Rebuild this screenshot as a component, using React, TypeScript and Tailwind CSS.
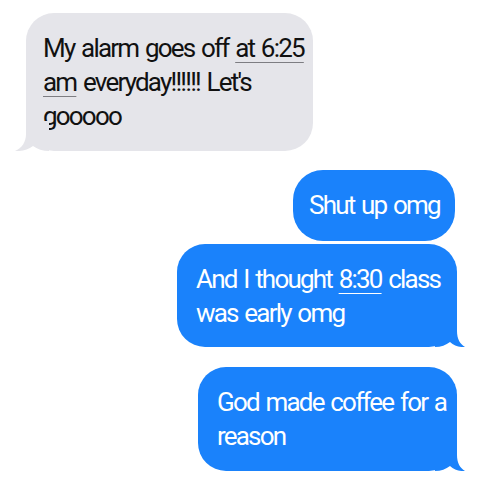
const font = { fontFamily: '"Roboto", "Liberation Sans", sans-serif' };

function TailLeft({ color }: { color: string }) {
  return (
    <svg className="absolute bottom-0 -left-[11px]" width="34" height="30" viewBox="0 0 34 30">
      <path d="M34 0 H11 V13 C11 21 7 27 0 30 C7 30.5 13 28.5 18 25 C22 28 28 30 34 30 Z" fill={color} />
    </svg>
  );
}

function TailRight({ color }: { color: string }) {
  return (
    <svg className="absolute bottom-0 -right-[8px]" width="30" height="30" viewBox="0 0 30 30">
      <path d="M0 0 H22 V14 C22 22 25 27 30 30 C24 30.5 19 28.5 15 25 C11 28 6 30 0 30 Z" fill={color} />
    </svg>
  );
}

export default function App() {
  return (
    <div className="w-[480px] h-[480px] bg-white overflow-hidden" style={font}>
      <div className="flex flex-col pt-[13px] text-[26px] leading-[34px] tracking-[-1.8px] [word-spacing:2px]">
        <div className="relative ml-[26px] w-[287px] rounded-[28px] bg-[#e5e5ea] pt-[18px] pb-[18px] pl-[17px] text-[#111111] whitespace-nowrap">
          My alarm goes off{" "}
          <span className="underline decoration-[#7d7d82] decoration-1 underline-offset-[5px]">at 6:25</span>
          <br />
          <span className="underline decoration-[#7d7d82] decoration-1 underline-offset-[5px]">am</span> everyday!!!!!! Let's
          <br />
          gooooo
          <TailLeft color="#e5e5ea" />
        </div>

        <div className="flex flex-col items-end mr-[25px] mt-[19px]">
          <div className="relative w-[162px] rounded-[30px] bg-[#1a82fb] pt-[18px] pb-[19px] pl-[16px] text-white whitespace-nowrap">
            Shut up omg
          </div>
        </div>

        <div className="flex flex-col items-end mr-[23px] mt-[3px]">
          <div className="relative w-[280px] rounded-[28px] bg-[#1a82fb] pt-[18px] pb-[17px] pl-[19px] text-white whitespace-nowrap">
            And I thought{" "}
            <span className="underline decoration-white decoration-1 underline-offset-[5px]">8:30</span> class
            <br />
            was early omg
            <TailRight color="#1a82fb" />
          </div>
        </div>

        <div className="flex flex-col items-end mr-[23px] mt-[20px]">
          <div className="relative w-[259px] rounded-[28px] bg-[#1a82fb] pt-[18px] pb-[18px] pl-[19px] text-white whitespace-nowrap">
            God made coffee for a
            <br />
            reason
            <TailRight color="#1a82fb" />
          </div>
        </div>
      </div>
    </div>
  );
}
